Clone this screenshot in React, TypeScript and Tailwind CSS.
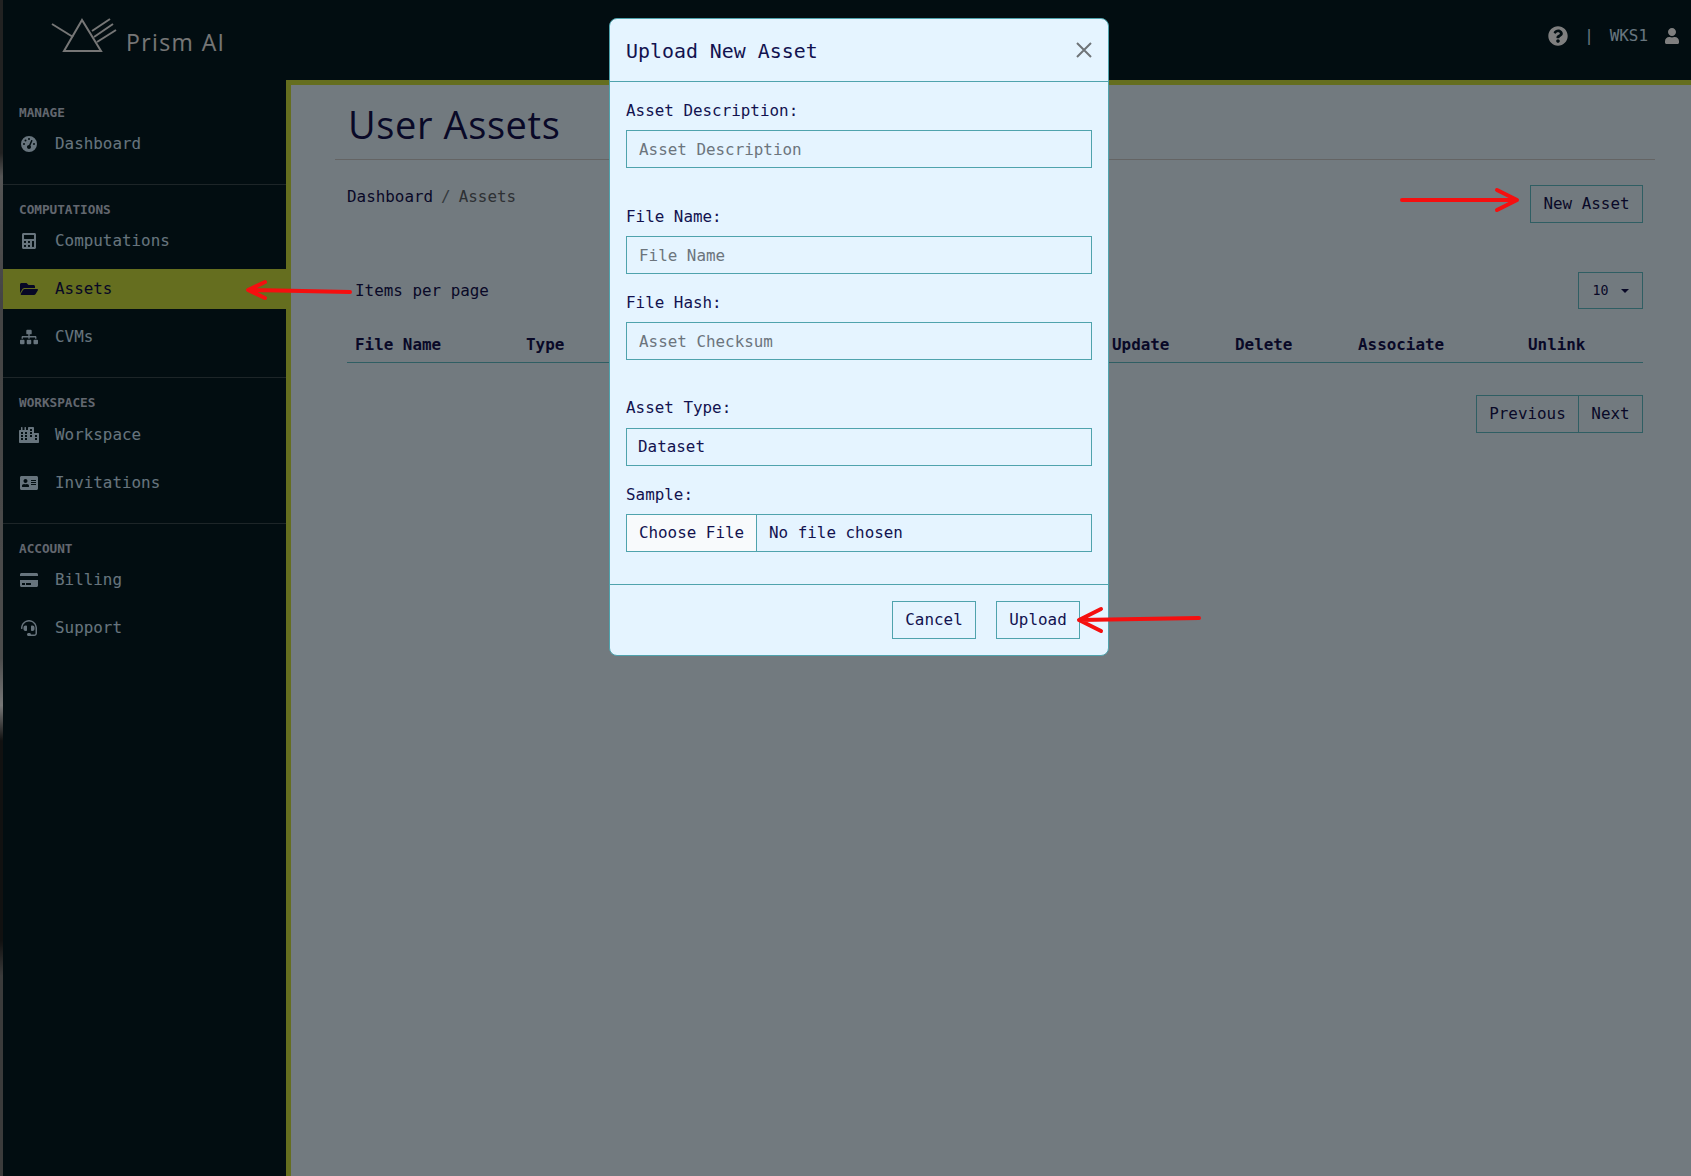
import React from "react";
import {
  FaCalculator,
  FaFolderOpen,
  FaSitemap,
  FaCity,
  FaAddressCard,
  FaCreditCard,
  FaHeadset,
  FaQuestionCircle,
  FaUser,
} from "react-icons/fa";
import { FaGaugeHigh } from "react-icons/fa6";

const mono = "font-['DejaVu_Sans_Mono',monospace]";

function NavItem({ icon, label, active }: { icon: React.ReactNode; label: string; active?: boolean }) {
  return (
    <div
      className={
        active
          ? "my-1 flex h-10 items-center gap-4 bg-[#cadc3e] pl-4 text-[#0e0e4a]"
          : "my-1 flex h-10 items-center gap-4 pl-4 text-[#cfe8fa]"
      }
    >
      <span className="flex w-5 justify-center">{icon}</span>
      <span className="text-[15.9px]">{label}</span>
    </div>
  );
}

function Heading({ children, tall }: { children: React.ReactNode; tall?: boolean }) {
  return (
    <div
      className={
        tall
          ? "flex h-4 items-center pl-4 text-[12.7px] font-bold text-[#c4cede]"
          : "flex h-[15px] items-center pl-4 text-[12.7px] font-bold text-[#c4cede]"
      }
    >
      {children}
    </div>
  );
}

function Sidebar() {
  return (
    <aside className="w-[283px] shrink-0 bg-[#041a22]">
      <div className="flex flex-col border-b border-[#3a4a50] pt-[25px] pb-4">
        <Heading>MANAGE</Heading>
        <NavItem icon={<FaGaugeHigh size={16} />} label="Dashboard" />
      </div>
      <div className="flex flex-col border-b border-[#3a4a50] pt-[17px] pb-4">
        <Heading>COMPUTATIONS</Heading>
        <NavItem icon={<FaCalculator size={16} />} label="Computations" />
        <NavItem icon={<FaFolderOpen size={18} />} label="Assets" active />
        <NavItem icon={<FaSitemap size={18} />} label="CVMs" />
      </div>
      <div className="flex flex-col border-b border-[#3a4a50] pt-[17px] pb-4">
        <Heading tall>WORKSPACES</Heading>
        <NavItem icon={<FaCity size={20} />} label="Workspace" />
        <NavItem icon={<FaAddressCard size={18} />} label="Invitations" />
      </div>
      <div className="flex flex-col pt-[17px] pb-4">
        <Heading>ACCOUNT</Heading>
        <NavItem icon={<FaCreditCard size={18} />} label="Billing" />
        <NavItem icon={<FaHeadset size={16} />} label="Support" />
      </div>
    </aside>
  );
}

function Header() {
  return (
    <header className="flex h-20 items-center justify-between bg-[#041a22]">
      <div className="flex items-center">
        <svg width="70" height="40" viewBox="0 0 70 40" className="mb-2 ml-[47px]" fill="none" stroke="#ececec" strokeWidth="2">
          <path d="M32 4 L14 35 H51 Z" />
          <path d="M2 8 L23 21" />
          <path d="M42 15 L60 3" />
          <path d="M44 21 L63 8" />
          <path d="M47 26 L66 14" />
        </svg>
        <span className="mt-[5px] ml-[6px] font-['Open_Sans',sans-serif] text-[23px] tracking-[1.4px] text-[#ececec]">Prism AI</span>
      </div>
      <div className="mr-[11px] mb-2 flex items-center text-[#d2ecff]">
        <FaQuestionCircle size={20} className="text-white" />
        <span className="ml-4 text-[15.9px]">|</span>
        <span className="ml-4 text-[15.9px]">WKS1</span>
        <FaUser size={16} className="ml-4 text-white" />
      </div>
    </header>
  );
}

function PageButton({ children, className }: { children: React.ReactNode; className?: string }) {
  return (
    <button className={"flex h-[38px] items-center justify-center border border-[#5fbcc6] " + (className ?? "")}>{children}</button>
  );
}

function Content() {
  return (
    <main className="min-w-0 flex-1 border-t-[5px] border-l-[5px] border-[#cadc3e] bg-[#e5f4ff] pr-9 pl-11 text-[15.9px] text-[#12124f]">
      <div className="border-b border-[#c8c8c8] pt-[14px] pb-[10px] pl-[13px]">
        <h1 className="font-['Open_Sans',sans-serif] text-[38px] leading-[50px] tracking-[0.6px] text-[#12124f]">User Assets</h1>
      </div>
      <div className="mr-[12px] ml-3">
        <div className="flex items-start justify-between pt-[25px]">
          <div className="flex leading-6">
            <span>Dashboard</span>
            <span className="ml-2 text-[#6c757d]">/</span>
            <span className="ml-2 text-[#5a6268]">Assets</span>
          </div>
          <PageButton className="w-[113px]">New Asset</PageButton>
        </div>
        <div className="flex items-center justify-between pt-[49px]">
          <span className="pl-2">Items per page</span>
          <button className="flex h-[37px] w-[65px] items-center justify-center gap-3 border border-[#5fbcc6] text-[13.3px]">
            10
            <span className="h-0 w-0 border-x-4 border-t-4 border-x-transparent border-t-[#12124f]" />
          </button>
        </div>
        <div className="mt-[24px] grid h-[30px] grid-cols-[171px_586px_123px_123px_170px_115px] items-start border-b border-[#5fbcc6] pl-2 font-bold leading-6">
          <span>File Name</span>
          <span>Type</span>
          <span>Update</span>
          <span>Delete</span>
          <span>Associate</span>
          <span>Unlink</span>
        </div>
        <div className="mt-8 flex justify-end">
          <PageButton className="w-[103px]">Previous</PageButton>
          <PageButton className="w-[64px] border-l-0">Next</PageButton>
        </div>
      </div>
    </main>
  );
}

function Field({ label, placeholder, className }: { label: string; placeholder: string; className?: string }) {
  return (
    <div className={className}>
      <label className="mb-[7px] block pt-px leading-6">{label}</label>
      <input
        placeholder={placeholder}
        className="block h-[38px] w-full border border-[#4fa3ad] bg-transparent px-3 outline-none placeholder:text-[#6c757d]"
      />
    </div>
  );
}

function UploadModal() {
  return (
    <div className="absolute top-[18px] left-[609px] w-[500px] rounded-lg border border-[#4fa3ad] bg-[#e5f4ff] text-[15.9px] text-[#12124f]">
      <div className="flex h-[63px] items-center justify-between border-b border-[#4fa3ad] px-4">
        <h5 className="pt-1 text-[19.9px]">Upload New Asset</h5>
        <svg width="16" height="16" viewBox="0 0 16 16" stroke="#6f7478" strokeWidth="2" fill="none">
          <path d="M1 1 L15 15 M15 1 L1 15" />
        </svg>
      </div>
      <div className="px-4 pt-4 pb-8">
        <Field label="Asset Description:" placeholder="Asset Description" />
        <Field label="File Name:" placeholder="File Name" className="mt-9" />
        <Field label="File Hash:" placeholder="Asset Checksum" className="mt-4" />
        <div className="mt-9">
          <label className="mb-2 block leading-6">Asset Type:</label>
          <select className="block h-[38px] w-full appearance-none border border-[#4fa3ad] bg-transparent px-[11px] outline-none">
            <option>Dataset</option>
          </select>
        </div>
        <div className="mt-4">
          <label className="mb-[7px] block pt-px leading-6">Sample:</label>
          <input
            type="file"
            className="block h-[38px] w-full border border-[#4fa3ad] bg-transparent outline-none file:mr-3 file:h-full file:w-[130px] file:border-0 file:border-r file:border-solid file:border-[#4fa3ad] file:bg-[#f8fafc] file:text-[#12124f]"
          />
        </div>
      </div>
      <div className="flex justify-end gap-5 border-t border-[#4fa3ad] py-4 pr-7">
        <button className="h-[38px] w-[84px] border border-[#4fa3ad]">Cancel</button>
        <button className="h-[38px] w-[84px] border border-[#4fa3ad]">Upload</button>
      </div>
    </div>
  );
}

export default function App() {
  return (
    <div className={"relative flex h-[1176px] w-[1691px] overflow-hidden bg-[#041a22] " + mono}>
      <div className="w-[3px] shrink-0 bg-[linear-gradient(to_bottom,#444_0%,#444_13%,#aaa_15%,#888_26%,#999_56%,#eee_60%,#222_63%,#222_80%,#777_83%,#777_100%)]" />
      <div className="flex min-w-0 flex-1 flex-col">
        <Header />
        <div className="flex flex-1">
          <Sidebar />
          <Content />
        </div>
      </div>
      <div className="absolute inset-0 bg-black/50" />
      <UploadModal />
      <svg className="pointer-events-none absolute inset-0" width="1691" height="1176" fill="none" stroke="#f50f0f" strokeWidth="4" strokeLinecap="round" strokeLinejoin="round">
        <path d="M1402 200 L1516 200 M1497 190 L1517 200 L1497 210" />
        <path d="M350 292 L250 290 M265 282 L248 290 L265 298" />
        <path d="M1199 618 L1080 620 M1101 609 L1079 620 L1101 631" />
      </svg>
    </div>
  );
}
